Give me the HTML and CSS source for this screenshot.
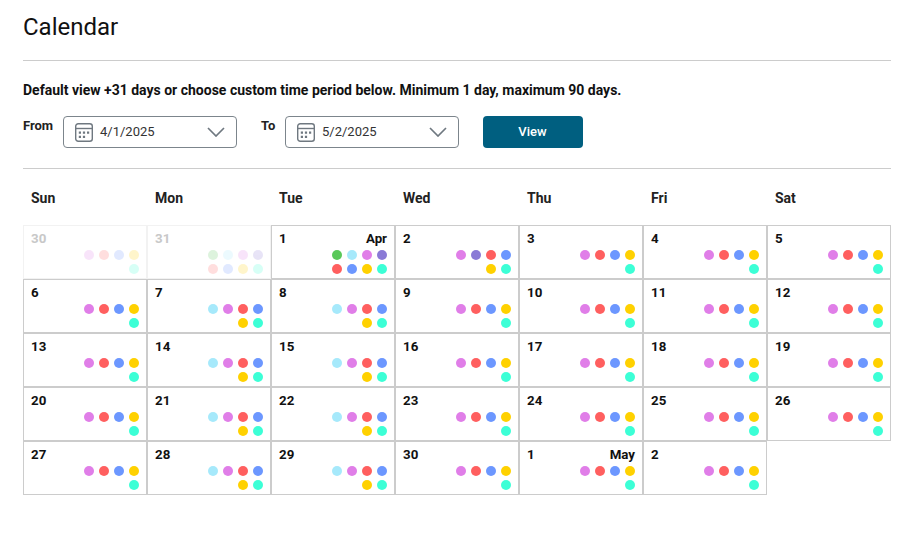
FILE: index.html
```html
<!DOCTYPE html>
<html lang="en">
<head>
    <meta charset="UTF-8">
    <title>Calendar</title>
    <link rel="stylesheet" href="styles.css">
</head>
<body>
    <h1 class="title">Calendar</h1>
    <p class="hint">Default view +31 days or choose custom time period below. Minimum 1 day, maximum 90 days.</p>

    <!-- Date range -->
    <div class="range">
        <span class="range-label">From</span>
        <div class="date-box">
            <svg class="cal-icon" viewBox="0 0 18 20"><rect x="0.7" y="1.7" width="16.6" height="17.6" rx="2.5"/><path d="M0.7 6.5h16.6"/><path class="cal-dots" d="M3.8 9.5h2.2v2.2H3.8zM7.9 9.5h2.2v2.2H7.9zM12 9.5h2.2v2.2H12zM3.8 13.8h2.2V16H3.8zM7.9 13.8h2.2V16H7.9z"/></svg>
            <span class="date-text">4/1/2025</span>
            <svg class="chevron" viewBox="0 0 18 10"><path d="M1 1l8 8 8-8"/></svg>
        </div>
        <span class="range-label to-label">To</span>
        <div class="date-box">
            <svg class="cal-icon" viewBox="0 0 18 20"><rect x="0.7" y="1.7" width="16.6" height="17.6" rx="2.5"/><path d="M0.7 6.5h16.6"/><path class="cal-dots" d="M3.8 9.5h2.2v2.2H3.8zM7.9 9.5h2.2v2.2H7.9zM12 9.5h2.2v2.2H12zM3.8 13.8h2.2V16H3.8zM7.9 13.8h2.2V16H7.9z"/></svg>
            <span class="date-text">5/2/2025</span>
            <svg class="chevron" viewBox="0 0 18 10"><path d="M1 1l8 8 8-8"/></svg>
        </div>
        <button class="view-btn">View</button>
    </div>

    <!-- Calendar -->
    <div class="weekdays">
        <div>Sun</div><div>Mon</div><div>Tue</div><div>Wed</div><div>Thu</div><div>Fri</div><div>Sat</div>
    </div>
    <div class="month">
        <div class="day faded"><div class="day-top"><span>30</span></div><div class="dots"><i class="pink"></i><i class="red"></i><i class="blue"></i><i class="yellow"></i><i class="teal"></i></div></div>
        <div class="day faded"><div class="day-top"><span>31</span></div><div class="dots"><i class="green"></i><i class="sky"></i><i class="pink"></i><i class="violet"></i><i class="red"></i><i class="blue"></i><i class="yellow"></i><i class="teal"></i></div></div>
        <div class="day"><div class="day-top"><span>1</span><span>Apr</span></div><div class="dots"><i class="green"></i><i class="sky"></i><i class="pink"></i><i class="violet"></i><i class="red"></i><i class="blue"></i><i class="yellow"></i><i class="teal"></i></div></div>
        <div class="day"><div class="day-top"><span>2</span></div><div class="dots"><i class="pink"></i><i class="violet"></i><i class="red"></i><i class="blue"></i><i class="yellow"></i><i class="teal"></i></div></div>
        <div class="day"><div class="day-top"><span>3</span></div><div class="dots"><i class="pink"></i><i class="red"></i><i class="blue"></i><i class="yellow"></i><i class="teal"></i></div></div>
        <div class="day"><div class="day-top"><span>4</span></div><div class="dots"><i class="pink"></i><i class="red"></i><i class="blue"></i><i class="yellow"></i><i class="teal"></i></div></div>
        <div class="day"><div class="day-top"><span>5</span></div><div class="dots"><i class="pink"></i><i class="red"></i><i class="blue"></i><i class="yellow"></i><i class="teal"></i></div></div>

        <div class="day"><div class="day-top"><span>6</span></div><div class="dots"><i class="pink"></i><i class="red"></i><i class="blue"></i><i class="yellow"></i><i class="teal"></i></div></div>
        <div class="day"><div class="day-top"><span>7</span></div><div class="dots"><i class="sky"></i><i class="pink"></i><i class="red"></i><i class="blue"></i><i class="yellow"></i><i class="teal"></i></div></div>
        <div class="day"><div class="day-top"><span>8</span></div><div class="dots"><i class="sky"></i><i class="pink"></i><i class="red"></i><i class="blue"></i><i class="yellow"></i><i class="teal"></i></div></div>
        <div class="day"><div class="day-top"><span>9</span></div><div class="dots"><i class="pink"></i><i class="red"></i><i class="blue"></i><i class="yellow"></i><i class="teal"></i></div></div>
        <div class="day"><div class="day-top"><span>10</span></div><div class="dots"><i class="pink"></i><i class="red"></i><i class="blue"></i><i class="yellow"></i><i class="teal"></i></div></div>
        <div class="day"><div class="day-top"><span>11</span></div><div class="dots"><i class="pink"></i><i class="red"></i><i class="blue"></i><i class="yellow"></i><i class="teal"></i></div></div>
        <div class="day"><div class="day-top"><span>12</span></div><div class="dots"><i class="pink"></i><i class="red"></i><i class="blue"></i><i class="yellow"></i><i class="teal"></i></div></div>

        <div class="day"><div class="day-top"><span>13</span></div><div class="dots"><i class="pink"></i><i class="red"></i><i class="blue"></i><i class="yellow"></i><i class="teal"></i></div></div>
        <div class="day"><div class="day-top"><span>14</span></div><div class="dots"><i class="sky"></i><i class="pink"></i><i class="red"></i><i class="blue"></i><i class="yellow"></i><i class="teal"></i></div></div>
        <div class="day"><div class="day-top"><span>15</span></div><div class="dots"><i class="sky"></i><i class="pink"></i><i class="red"></i><i class="blue"></i><i class="yellow"></i><i class="teal"></i></div></div>
        <div class="day"><div class="day-top"><span>16</span></div><div class="dots"><i class="pink"></i><i class="red"></i><i class="blue"></i><i class="yellow"></i><i class="teal"></i></div></div>
        <div class="day"><div class="day-top"><span>17</span></div><div class="dots"><i class="pink"></i><i class="red"></i><i class="blue"></i><i class="yellow"></i><i class="teal"></i></div></div>
        <div class="day"><div class="day-top"><span>18</span></div><div class="dots"><i class="pink"></i><i class="red"></i><i class="blue"></i><i class="yellow"></i><i class="teal"></i></div></div>
        <div class="day"><div class="day-top"><span>19</span></div><div class="dots"><i class="pink"></i><i class="red"></i><i class="blue"></i><i class="yellow"></i><i class="teal"></i></div></div>

        <div class="day"><div class="day-top"><span>20</span></div><div class="dots"><i class="pink"></i><i class="red"></i><i class="blue"></i><i class="yellow"></i><i class="teal"></i></div></div>
        <div class="day"><div class="day-top"><span>21</span></div><div class="dots"><i class="sky"></i><i class="pink"></i><i class="red"></i><i class="blue"></i><i class="yellow"></i><i class="teal"></i></div></div>
        <div class="day"><div class="day-top"><span>22</span></div><div class="dots"><i class="sky"></i><i class="pink"></i><i class="red"></i><i class="blue"></i><i class="yellow"></i><i class="teal"></i></div></div>
        <div class="day"><div class="day-top"><span>23</span></div><div class="dots"><i class="pink"></i><i class="red"></i><i class="blue"></i><i class="yellow"></i><i class="teal"></i></div></div>
        <div class="day"><div class="day-top"><span>24</span></div><div class="dots"><i class="pink"></i><i class="red"></i><i class="blue"></i><i class="yellow"></i><i class="teal"></i></div></div>
        <div class="day"><div class="day-top"><span>25</span></div><div class="dots"><i class="pink"></i><i class="red"></i><i class="blue"></i><i class="yellow"></i><i class="teal"></i></div></div>
        <div class="day"><div class="day-top"><span>26</span></div><div class="dots"><i class="pink"></i><i class="red"></i><i class="blue"></i><i class="yellow"></i><i class="teal"></i></div></div>

        <div class="day"><div class="day-top"><span>27</span></div><div class="dots"><i class="pink"></i><i class="red"></i><i class="blue"></i><i class="yellow"></i><i class="teal"></i></div></div>
        <div class="day"><div class="day-top"><span>28</span></div><div class="dots"><i class="sky"></i><i class="pink"></i><i class="red"></i><i class="blue"></i><i class="yellow"></i><i class="teal"></i></div></div>
        <div class="day"><div class="day-top"><span>29</span></div><div class="dots"><i class="sky"></i><i class="pink"></i><i class="red"></i><i class="blue"></i><i class="yellow"></i><i class="teal"></i></div></div>
        <div class="day"><div class="day-top"><span>30</span></div><div class="dots"><i class="pink"></i><i class="red"></i><i class="blue"></i><i class="yellow"></i><i class="teal"></i></div></div>
        <div class="day"><div class="day-top"><span>1</span><span>May</span></div><div class="dots"><i class="pink"></i><i class="red"></i><i class="blue"></i><i class="yellow"></i><i class="teal"></i></div></div>
        <div class="day"><div class="day-top"><span>2</span></div><div class="dots"><i class="pink"></i><i class="red"></i><i class="blue"></i><i class="yellow"></i><i class="teal"></i></div></div>
    </div>
</body>
</html>
```

FILE: styles.css
```css
html, body { margin: 0; padding: 0; background: #fff; }
body { padding: 0 12px 0 23px; font-family: Roboto, "Liberation Sans", sans-serif; color: #111; }

.title { margin: 0; height: 60px; font-size: 24px; font-weight: 400; line-height: 54px; border-bottom: 1px solid #ccc; }
.hint { margin: 20px 0 0; font-size: 14px; font-weight: 700; line-height: 18px; }

.range { display: flex; align-items: flex-start; gap: 10px; margin-top: 17px; padding-bottom: 20px; border-bottom: 1px solid #ccc; }
.range-label { width: 30px; font-size: 13px; font-weight: 700; line-height: 20px; color: #222; }
.to-label { width: 14px; }
.date-box { display: flex; align-items: center; width: 174px; height: 32px; box-sizing: border-box; padding: 0 11px; margin-right: 14px; border: 1px solid #7c858c; border-radius: 4px; }
.cal-icon { width: 18px; height: 20px; flex: none; fill: none; stroke: #6f7880; stroke-width: 1.4; }
.cal-dots { fill: #6f7880; stroke: none; }
.date-text { margin: 0 0 2px 7px; font-size: 13px; color: #333; }
.chevron { width: 18px; height: 10px; margin-left: auto; fill: none; stroke: #6f7880; stroke-width: 1.7; }
.view-btn { width: 100px; height: 32px; padding: 0 1px 2px 0; border: none; border-radius: 4px; background: #005f80; color: #fff; font-family: inherit; font-size: 13px; font-weight: 500; }

.weekdays { display: grid; grid-template-columns: repeat(7, 124px); padding: 21px 0 19px; font-size: 14px; font-weight: 700; line-height: 16px; }
.weekdays div { padding-left: 8px; color: #222; }

.month { display: grid; grid-template-columns: repeat(7, 124px); grid-auto-rows: 54px; }
.day { box-sizing: border-box; padding: 5px 7px 0 7px; border: 1px solid #ccc; }
.day-top { display: flex; justify-content: space-between; height: 16px; font-size: 13.3px; font-weight: 700; line-height: 16px; }
.dots { display: flex; flex-wrap: wrap; justify-content: flex-end; gap: 4px 5px; width: 55px; margin: 3px 0 0 auto; }
.dots i { width: 10px; height: 10px; border-radius: 50%; }

.faded { border-color: #f2f2f2; }
.faded .day-top { color: #c8c8c8; }
.faded .dots { opacity: 0.2; }

.pink { background: #e07ee8; }
.red { background: #ff5f5f; }
.blue { background: #6c97ff; }
.yellow { background: #ffd100; }
.teal { background: #3cffd6; }
.sky { background: #a6e9fb; }
.green { background: #5ac85a; }
.violet { background: #8a7ad6; }
```
